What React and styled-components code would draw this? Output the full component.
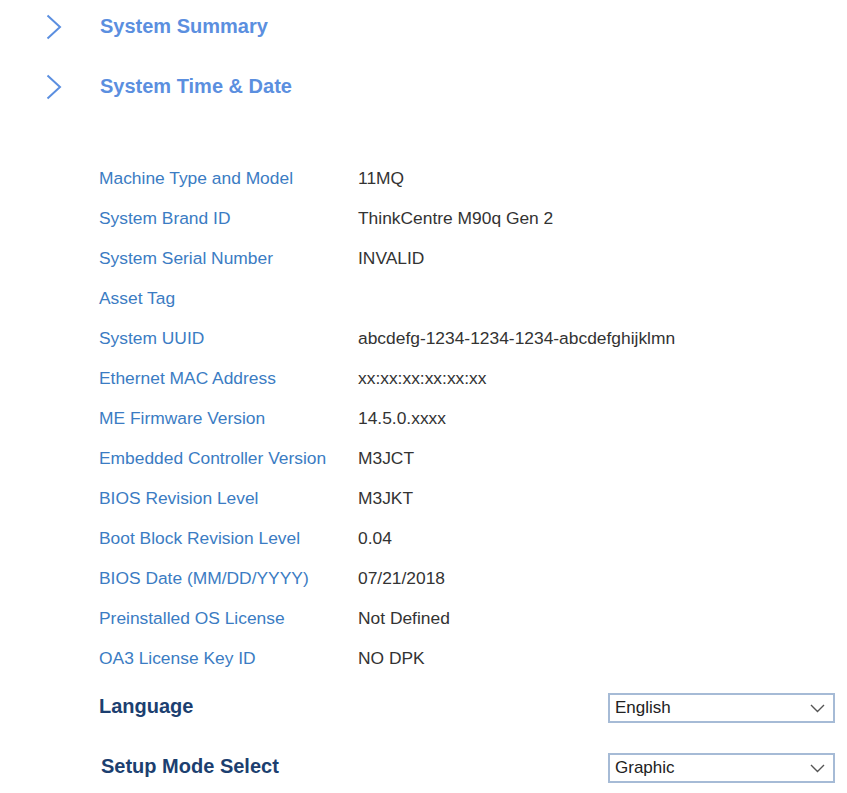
import React from 'react';
import styled, { createGlobalStyle } from 'styled-components';

const GlobalStyle = createGlobalStyle`
  body {
    margin: 0;
    background: #ffffff;
    font-family: "Liberation Sans", Arial, sans-serif;
  }
`;

const Page = styled.div`
  width: 847px;
  min-height: 793px;
  padding-top: 7px;
  box-sizing: border-box;
  overflow: hidden;
`;

const Sections = styled.div`
  display: flex;
  flex-direction: column;
  gap: 20px;
`;

const SectionHeader = styled.div`
  display: flex;
  align-items: center;
  height: 40px;
  padding-left: 46px;
  cursor: pointer;
`;

const Chevron = styled.svg`
  width: 16px;
  height: 26px;
  flex-shrink: 0;
`;

const SectionTitle = styled.span`
  margin-left: 38px;
  margin-bottom: 1px;
  font-size: 20px;
  font-weight: bold;
  color: #5b8fdf;
`;

const InfoTable = styled.div`
  margin-top: 51px;
  padding-left: 99px;
  display: flex;
  flex-direction: column;
`;

const InfoRow = styled.div`
  display: flex;
  align-items: center;
  height: 40px;
  font-size: 17.4px;
`;

const InfoLabel = styled.span`
  width: 259px;
  flex-shrink: 0;
  color: #3b7cc3;
  white-space: nowrap;
`;

const InfoValue = styled.span`
  color: #333333;
  white-space: nowrap;
`;

const SettingRow = styled.div`
  display: flex;
  align-items: center;
  justify-content: space-between;
  height: 60px;
  width: 736px;
`;

const SettingLabel = styled.span`
  margin-bottom: 3px;
  font-size: 20px;
  font-weight: bold;
  color: #1c3f70;
  padding-left: ${(p) => p.$indent || 0}px;
`;

const SelectBox = styled.div`
  display: flex;
  align-items: center;
  justify-content: space-between;
  width: 227px;
  height: 30px;
  box-sizing: border-box;
  border: 2px solid #a6bbd6;
  padding: 0 8px 0 5px;
  font-size: 17px;
  color: #222222;
  background: #ffffff;
`;

const rows = [
  ['Machine Type and Model', '11MQ'],
  ['System Brand ID', 'ThinkCentre M90q Gen 2'],
  ['System Serial Number', 'INVALID'],
  ['Asset Tag', ''],
  ['System UUID', 'abcdefg-1234-1234-1234-abcdefghijklmn'],
  ['Ethernet MAC Address', 'xx:xx:xx:xx:xx:xx'],
  ['ME Firmware Version', '14.5.0.xxxx'],
  ['Embedded Controller Version', 'M3JCT'],
  ['BIOS Revision Level', 'M3JKT'],
  ['Boot Block Revision Level', '0.04'],
  ['BIOS Date (MM/DD/YYYY)', '07/21/2018'],
  ['Preinstalled OS License', 'Not Defined'],
  ['OA3 License Key ID', 'NO DPK'],
];

const ExpandIcon = () => (
  <Chevron viewBox="0 0 16 26">
    <polyline
        points="1.5,1.5 14,13 1.5,24.5"
        fill="none"
        stroke="#5b8fe0"
        strokeWidth="2" />
  </Chevron>
);

const DropIcon = () => (
  <svg width="15" height="9" viewBox="0 0 15 9">
    <polyline points="1,1 7.5,7.5 14,1" fill="none" stroke="#555" strokeWidth="1.4" />
  </svg>
);

const Select = ({ value }) => (
  <SelectBox>
    <span>{ value }</span>
    <DropIcon />
  </SelectBox>
);

export default function App() {
  return (
    <Page>
      <GlobalStyle />
      <Sections>
        <SectionHeader>
          <ExpandIcon />
          <SectionTitle>System Summary</SectionTitle>
        </SectionHeader>
        <SectionHeader>
          <ExpandIcon />
          <SectionTitle>System Time &amp; Date</SectionTitle>
        </SectionHeader>
      </Sections>
      <InfoTable>
        {rows.map(([label, value]) => (
          <InfoRow key={label}>
            <InfoLabel>{ label }</InfoLabel>
            <InfoValue>{ value }</InfoValue>
          </InfoRow>
        ))}
        <SettingRow>
          <SettingLabel>Language</SettingLabel>
          <Select value="English" />
        </SettingRow>
        <SettingRow>
          <SettingLabel $indent={2}>Setup Mode Select</SettingLabel>
          <Select value="Graphic" />
        </SettingRow>
      </InfoTable>
    </Page>
  );
}
